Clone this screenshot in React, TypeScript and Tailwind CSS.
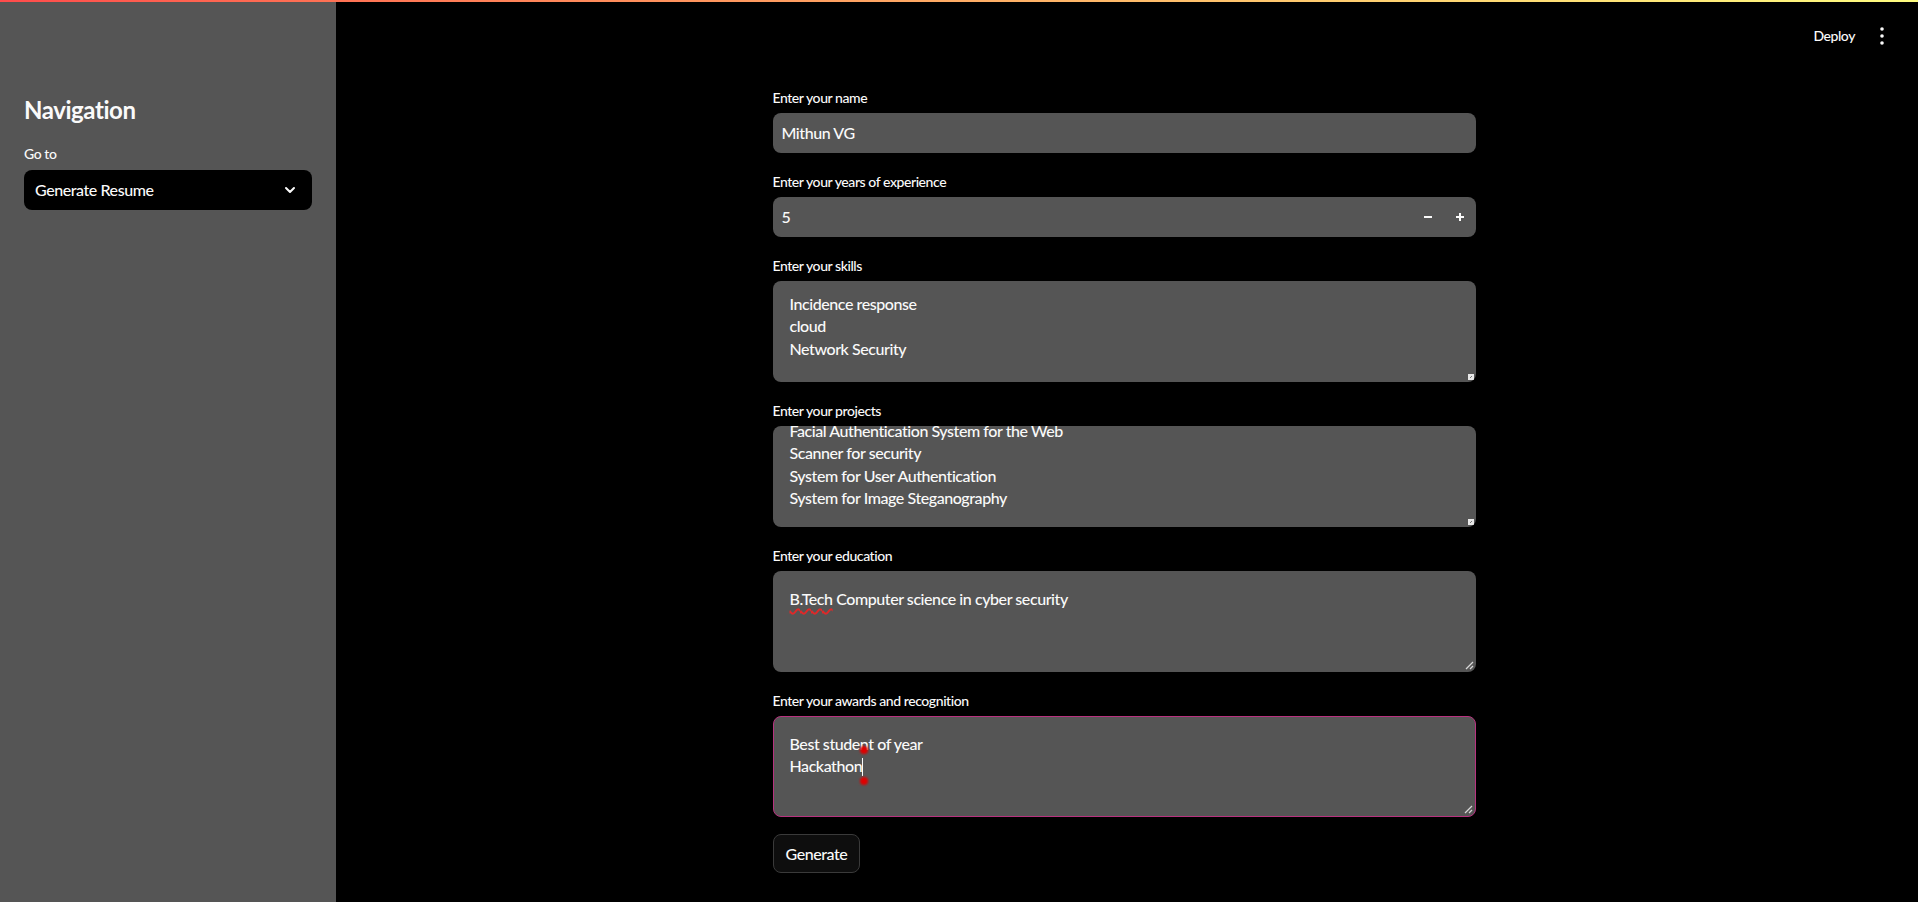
import React from "react";

function Label({ children }: { children: React.ReactNode }) {
  return <div className="h-[23px] text-[14px] leading-[23px] text-[#fafafa] mb-[4px]">{children}</div>;
}

function GripSmall() {
  return (
    <svg width="7" height="7" viewBox="0 0 7 7" className="absolute right-[1px] bottom-[1px]">
      <path d="M0 0 H6 V6 H0 Z" fill="#e8e8e8" />
      <path d="M2 4 L4 2" stroke="#777" strokeWidth="1" />
    </svg>
  );
}

function GripLines() {
  return (
    <svg width="9" height="9" viewBox="0 0 9 9" className="absolute right-[2px] bottom-[2px]">
      <path d="M8 1 L1 8" stroke="#d8d8d8" strokeWidth="1.3" />
      <path d="M8 5 L5 8" stroke="#d8d8d8" strokeWidth="1.3" />
    </svg>
  );
}

export default function App() {
  return (
    <div className="w-[1918px] h-[902px] overflow-hidden bg-black flex flex-col font-['Lato',sans-serif] font-medium tracking-[-0.027em] text-[#fafafa]">
      <div className="h-[2px] w-full bg-linear-to-r from-[#ff4b4b] to-[#fffd80]" />
      <div className="flex flex-1 min-h-0">
        {/* Sidebar */}
        <aside className="w-[336px] shrink-0 bg-[#555555] px-6 pt-[93px]">
          <h1 className="text-[24px] leading-[29px] font-bold text-[#fafafa] mb-[20px]">Navigation</h1>
          <div className="h-5 text-[14px] leading-5 mb-[6px]">Go to</div>
          <div className="h-10 rounded-lg bg-black flex items-center justify-between pl-[11px] pr-[14px]">
            <span className="text-[16px]">Generate Resume</span>
            <svg width="16" height="16" viewBox="0 0 24 24" fill="none" stroke="#fafafa" strokeWidth="3" strokeLinecap="round" strokeLinejoin="round">
              <path d="m6 9 6 6 6-6" />
            </svg>
          </div>
        </aside>

        {/* Main */}
        <main className="flex-1 flex flex-col pr-[6px]">
          <header className="h-[68px] flex items-center justify-end pr-[18px]">
            <span className="text-[14px] leading-5 mr-[15px]">Deploy</span>
            <svg width="24" height="24" viewBox="0 0 24 24">
              <circle cx="12" cy="5" r="1.8" fill="#fafafa" />
              <circle cx="12" cy="12" r="1.8" fill="#fafafa" />
              <circle cx="12" cy="19" r="1.8" fill="#fafafa" />
            </svg>
          </header>

          <div className="w-[703px] mx-auto pt-[16px] flex flex-col gap-[17px]">
            <div>
              <Label>Enter your name</Label>
              <div className="h-10 rounded-lg bg-[#555555] flex items-center pl-[9px] text-[16px] leading-[22px]">Mithun VG</div>
            </div>

            <div>
              <Label>Enter your years of experience</Label>
              <div className="h-10 rounded-lg bg-[#555555] flex items-center pl-[9px] text-[16px]">
                <span className="flex-1">5</span>
                <div className="w-8 h-full flex items-center justify-center">
                  <svg width="10" height="10" viewBox="0 0 10 10">
                    <rect x="1" y="4" width="8" height="2" fill="#fafafa" />
                  </svg>
                </div>
                <div className="w-8 h-full flex items-center justify-center">
                  <svg width="10" height="10" viewBox="0 0 10 10">
                    <rect x="1" y="4" width="8" height="2" fill="#fafafa" />
                    <rect x="4" y="1" width="2" height="8" fill="#fafafa" />
                  </svg>
                </div>
              </div>
            </div>

            <div>
              <Label>Enter your skills</Label>
              <div className="relative h-[101px] rounded-lg bg-[#555555] overflow-hidden">
                <div className="px-[17px] pt-[12px] text-[16px] leading-[22.4px]">
                  <div>Incidence response</div>
                  <div>cloud</div>
                  <div>Network Security</div>
                </div>
                <GripSmall />
              </div>
            </div>

            <div>
              <Label>Enter your projects</Label>
              <div className="relative h-[101px] rounded-lg bg-[#555555] overflow-hidden">
                <div className="px-[17px] mt-[-6px] text-[16px] leading-[22.4px]">
                  <div>Facial Authentication System for the Web</div>
                  <div>Scanner for security</div>
                  <div>System for User Authentication</div>
                  <div>System for Image Steganography</div>
                </div>
                <GripSmall />
              </div>
            </div>

            <div>
              <Label>Enter your education</Label>
              <div className="relative h-[101px] rounded-lg bg-[#555555] overflow-hidden">
                <div className="px-[17px] pt-[17px] text-[16px] leading-[22.4px]">
                  <span className="underline decoration-wavy decoration-[#e02828] decoration-[1.5px] underline-offset-[3px]">B.Tech</span>{" "}
                  Computer science in cyber security
                </div>
                <GripLines />
              </div>
            </div>

            <div>
              <Label>Enter your awards and recognition</Label>
              <div className="relative h-[101px] rounded-lg bg-[#555555] border border-[#b8327f] overflow-hidden">
                <div className="px-4 pt-4 text-[16px] leading-[22.4px]">
                  <div>Best student of year</div>
                  <div>Hackathon</div>
                </div>
                <span className="absolute left-[88px] top-[41px] w-px h-[18px] bg-[#fafafa]" />
                <span className="absolute left-[86px] top-[29px] w-[8px] h-[8px] rounded-full bg-[#e00000] blur-[1px]" />
                <span className="absolute left-[86px] top-[60px] w-[8px] h-[8px] rounded-full bg-[#e00000] blur-[1px]" />
                <GripLines />
              </div>
            </div>

            <div>
              <button className="h-[39px] px-3 rounded-lg bg-[#0e0e0e] border border-[#3a3a3a] text-[16px] font-medium text-[#fafafa] tracking-[-0.027em]">
                Generate
              </button>
            </div>
          </div>
        </main>
      </div>
    </div>
  );
}
